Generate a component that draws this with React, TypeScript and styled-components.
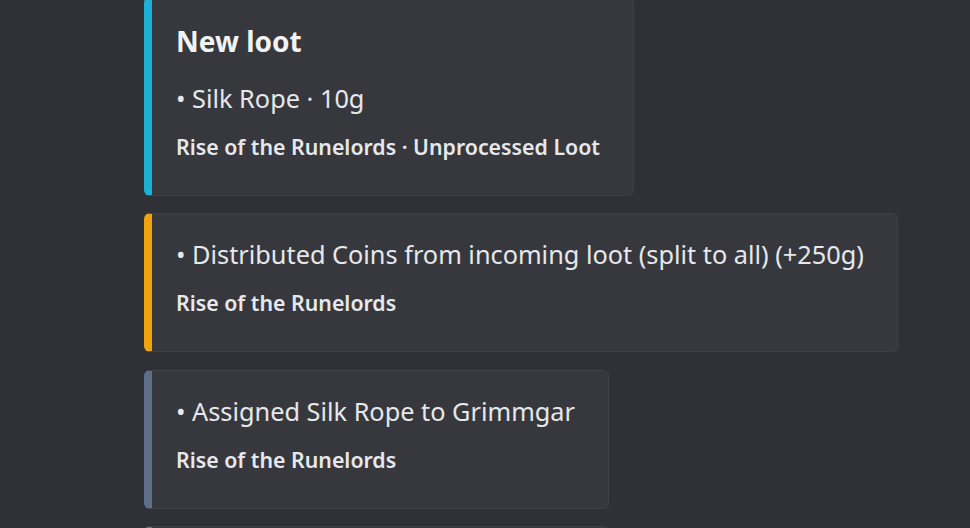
import React from "react";
import styled, { createGlobalStyle } from "styled-components";

const Global = createGlobalStyle`
  html, body { margin: 0; padding: 0; background: #303136; }
  body { font-family: "Noto Sans", "Lato", sans-serif; overflow: hidden; }
`;

const Page = styled.div`
  width: 970px;
  height: 528px;
  overflow: hidden;
  background: #303136;
`;

const Feed = styled.div`
  display: flex;
  flex-direction: column;
  align-items: flex-start;
  gap: 17.5px;
  padding-left: 144px;
  margin-top: -3.5px;
`;

const Embed = styled.div<{ $accent: string }>`
  display: flex;
  flex-direction: column;
  box-sizing: border-box;
  background: #37383d;
  border: 1px solid #404147;
  border-left: 8px solid ${(p) => p.$accent};
  border-radius: 6px;
  padding: 24px 33px 34px 24px;
  color: #dbdee1;
`;

const Title = styled.div`
  font-size: 28px;
  line-height: 38px;
  font-weight: 700;
  color: #f2f3f5;
  margin-bottom: 22px;
`;

const Body = styled.div`
  font-size: 25.3px;
  line-height: 32px;
  font-weight: 400;
  color: #e6e8eb;
  white-space: nowrap;
`;

const Footer = styled.div`
  font-size: 21.3px;
  line-height: 28px;
  font-weight: 600;
  color: #e6e8eb;
  margin-top: 19px;
  white-space: nowrap;
`;

const entries = [
  {
    accent: "#1cb0d6",
    title: "New loot",
    body: "• Silk Rope · 10g",
    footer: "Rise of the Runelords · Unprocessed Loot",
  },
  {
    accent: "#f0a30f",
    body: "• Distributed Coins from incoming loot (split to all) (+250g)",
    footer: "Rise of the Runelords",
  },
  {
    accent: "#5f6e89",
    body: "• Assigned Silk Rope to Grimmgar",
    footer: "Rise of the Runelords",
  },
  {
    accent: "#5f6e89",
    body: "• Assigned Silk Rope to Grimmgar",
    footer: "Rise of the Runelords",
  },
];

export default function App() {
  return (
    <Page>
      <Global />
      <Feed>
        {entries.map((e, i) => (
          <Embed key={i} $accent={e.accent}>
            {e.title && <Title>{e.title}</Title>}
            <Body>{e.body}</Body>
            <Footer>{e.footer}</Footer>
          </Embed>
        ))}
      </Feed>
    </Page>
  );
}
